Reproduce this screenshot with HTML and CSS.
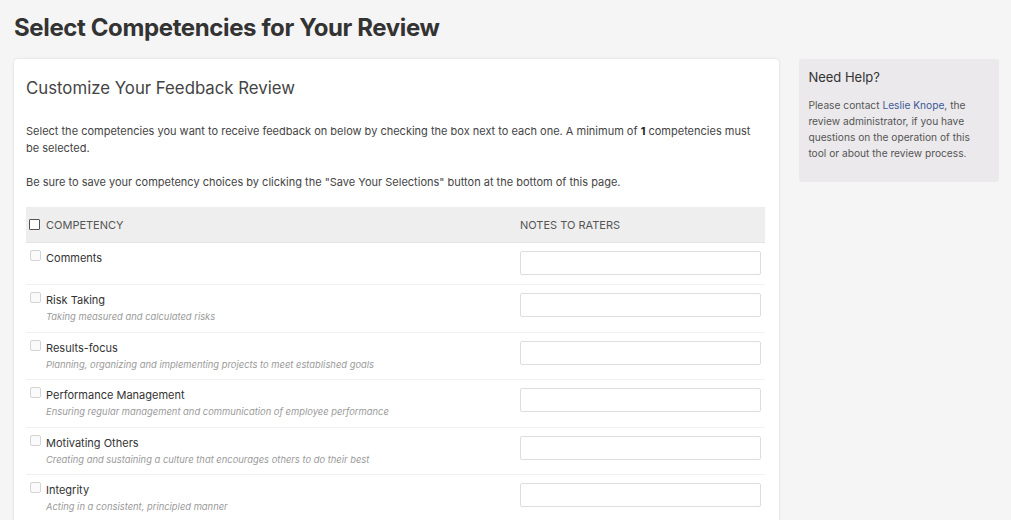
FILE: index.html
```html
<!DOCTYPE html>
<html lang="en">
<head>
<meta charset="UTF-8">
<title>Select Competencies for Your Review</title>
<link rel="stylesheet" href="styles.css">
</head>
<body>
    <h1 class="page-title">Select Competencies for Your Review</h1>
    <div class="layout">
        <div class="card">
            <h2>Customize Your Feedback Review</h2>
            <p>Select the competencies you want to receive feedback on below by checking the box next to each one. A minimum of <b>1</b> competencies must be selected.</p>
            <p class="save-note">Be sure to save your competency choices by clicking the "Save Your Selections" button at the bottom of this page.</p>

            <div class="comp-table">
                <div class="comp-head">
                    <div class="col-name"><input type="checkbox" class="head-check"> COMPETENCY</div>
                    <div class="col-notes">NOTES TO RATERS</div>
                </div>
                <div class="comp-row">
                    <div class="col-name">
                        <input type="checkbox">
                        <div><div class="comp-title">Comments</div></div>
                    </div>
                    <div class="col-notes"><input type="text"></div>
                </div>
                <div class="comp-row">
                    <div class="col-name">
                        <input type="checkbox">
                        <div>
                            <div class="comp-title">Risk Taking</div>
                            <div class="comp-desc">Taking measured and calculated risks</div>
                        </div>
                    </div>
                    <div class="col-notes"><input type="text"></div>
                </div>
                <div class="comp-row">
                    <div class="col-name">
                        <input type="checkbox">
                        <div>
                            <div class="comp-title">Results-focus</div>
                            <div class="comp-desc">Planning, organizing and implementing projects to meet established goals</div>
                        </div>
                    </div>
                    <div class="col-notes"><input type="text"></div>
                </div>
                <div class="comp-row">
                    <div class="col-name">
                        <input type="checkbox">
                        <div>
                            <div class="comp-title">Performance Management</div>
                            <div class="comp-desc">Ensuring regular management and communication of employee performance</div>
                        </div>
                    </div>
                    <div class="col-notes"><input type="text"></div>
                </div>
                <div class="comp-row">
                    <div class="col-name">
                        <input type="checkbox">
                        <div>
                            <div class="comp-title">Motivating Others</div>
                            <div class="comp-desc">Creating and sustaining a culture that encourages others to do their best</div>
                        </div>
                    </div>
                    <div class="col-notes"><input type="text"></div>
                </div>
                <div class="comp-row">
                    <div class="col-name">
                        <input type="checkbox">
                        <div>
                            <div class="comp-title">Integrity</div>
                            <div class="comp-desc">Acting in a consistent, principled manner</div>
                        </div>
                    </div>
                    <div class="col-notes"><input type="text"></div>
                </div>
            </div>
        </div>

        <div class="help">
            <h3>Need Help?</h3>
            <p>Please contact <a href="#">Leslie Knope</a>, the review administrator, if you have questions on the operation of this tool or about the review process.</p>
        </div>
    </div>
</body>
</html>
```

FILE: styles.css
```css
html, body {
    margin: 0;
    background-color: #f5f5f5;
    font-family: Inter, "Noto Sans", sans-serif;
    color: #333;
}
body {
    padding: 0 12px 0 14px;
    overflow: hidden;
}
.page-title {
    font-size: 24px;
    font-weight: 700;
    color: #333;
    margin: 0;
    padding-top: 13px;
    height: 46px;
    letter-spacing: -0.38px;
}
.layout {
    display: flex;
    gap: 20px;
    align-items: flex-start;
}
.card {
    width: 741px;
    background-color: #fff;
    border-radius: 4px;
    box-shadow: 0 0 3px rgba(0, 0, 0, 0.12);
    padding: 18px 14px 20px 12px;
}
.card h2 {
    font-size: 16.8px;
    font-weight: 400;
    color: #444;
    margin: 0 0 24px 0;
    line-height: 22px;
}
.card p {
    font-size: 11px;
    line-height: 17px;
    color: #444;
    margin: 0 0 17px 0;
}
.card p.save-note {
    margin-bottom: 16px;
}
.card p b {
    color: #222;
}
.comp-head, .comp-row {
    display: grid;
    grid-template-columns: 490px 1fr;
}
.comp-head {
    background-color: #eee;
    height: 35px;
    align-items: center;
    font-size: 11px;
    color: #555;
    border-bottom: 1px solid #e4e4e4;
}
.comp-head .col-name {
    display: flex;
    align-items: center;
    gap: 6px;
    padding-left: 3px;
}
.comp-head .col-notes {
    padding-left: 4px;
}
input[type="checkbox"] {
    appearance: none;
    -webkit-appearance: none;
    box-sizing: border-box;
    margin: 0;
    flex-shrink: 0;
}
.head-check {
    width: 11px;
    height: 11px;
    border: 1px solid #555;
    border-radius: 1px;
    background: #fff;
}
.comp-row {
    border-bottom: 1px solid #f0f0f0;
}
.comp-row .col-name {
    display: flex;
    align-items: flex-start;
    gap: 5px;
    padding: 7px 0 8.5px 4px;
}
.comp-row input[type="checkbox"] {
    width: 11px;
    height: 11px;
    border: 1px solid #d4d4d4;
    border-radius: 2px;
    background: #fafafa;
}
.comp-title {
    font-size: 11px;
    line-height: 16px;
    color: #333;
}
.comp-desc {
    font-size: 9.4px;
    line-height: 12px;
    font-style: italic;
    color: #9a9a9a;
    margin-top: 3px;
}
.comp-row .col-notes {
    padding: 8px 4px 9px 4px;
}
.comp-row input[type="text"] {
    display: block;
    width: 100%;
    height: 24px;
    box-sizing: border-box;
    border: 1px solid #ddd;
    border-radius: 2px;
    background: #fff;
}
.help {
    width: 200px;
    box-sizing: border-box;
    background-color: #ebe9eb;
    border-radius: 3px;
    padding: 10px 9px 21px 9px;
}
.help h3 {
    font-size: 13px;
    font-weight: 400;
    color: #333;
    margin: 0 0 12px 0;
}
.help p {
    font-size: 10.2px;
    line-height: 16px;
    color: #555;
    margin: 0;
}
.help a {
    color: #3b5998;
    text-decoration: none;
}
```
